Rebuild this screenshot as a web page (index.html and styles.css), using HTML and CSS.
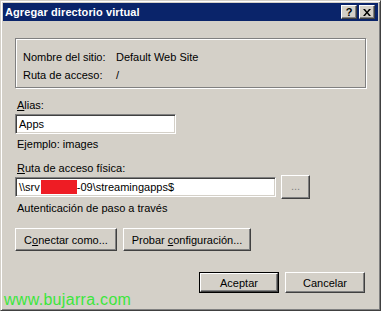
FILE: index.html
```html
<!DOCTYPE html>
<html>
<head>
<meta charset="utf-8">
<link rel="stylesheet" href="styles.css">
</head>
<body>
<div class="window">
  <div class="titlebar">
    <span class="title">Agregar directorio virtual</span>
    <div class="tbtns">
      <span class="tbtn help">?</span>
      <span class="tbtn close"><svg width="8" height="7" viewBox="0 0 8 7"><path d="M0 0h2l2 2.5L6 0h2L5 3.5 8 7H6L4 4.5 2 7H0l3-3.5z" fill="#000"/></svg></span>
    </div>
  </div>
  <div class="content">
    <div class="frame">
      <div class="frow"><span class="flabel">Nombre del sitio:</span><span>Default Web Site</span></div>
      <div class="frow"><span class="flabel">Ruta de acceso:</span><span>/</span></div>
    </div>
    <div class="label first"><u>A</u>lias:</div>
    <div class="input alias">Apps</div>
    <div class="label ex">Ejemplo: images</div>
    <div class="label ruta"><u>R</u>uta de acceso física:</div>
    <div class="pathrow">
      <div class="input path"><span>\\srv</span><span class="redact"></span><span>-09\streamingapps$</span></div>
      <div class="btn browse">...</div>
    </div>
    <div class="label auth">Autenticación de paso a través</div>
    <div class="btnrow">
      <div class="btn conn"><span>C<u>o</u>nectar como...</span></div>
      <div class="btn test"><span>Probar <u>c</u>onfiguración...</span></div>
    </div>
    <div class="okrow">
      <div class="defwrap"><div class="btn ok">Aceptar</div></div>
      <div class="btn cancel">Cancelar</div>
    </div>
  </div>
  <div class="watermark">www.bujarra.com</div>
</div>
</body>
</html>
```
FILE: styles.css
```css
html, body {
  margin: 0;
  padding: 0;
  background: #d4d0c8;
}
body {
  font-family: "Liberation Sans", Arial, sans-serif;
  font-size: 11px;
  color: #000;
}
.window {
  position: relative;
  box-sizing: border-box;
  width: 381px;
  height: 311px;
  background: #d4d0c8;
  border-top: 1px solid #d4d0c8;
  border-left: 1px solid #d4d0c8;
  border-right: 1px solid #404040;
  border-bottom: 1px solid #404040;
  box-shadow: inset 1px 1px 0 #fff, inset -1px -1px 0 #808080;
  padding: 2px;
  overflow: hidden;
}
.titlebar {
  height: 18px;
  background: #0a246a;
  display: flex;
  align-items: center;
  justify-content: space-between;
  padding: 0 3px 0 2px;
}
.title {
  color: #fff;
  font-weight: bold;
  font-size: 11px;
  letter-spacing: 0.1px;
}
.tbtns {
  display: flex;
  gap: 2px;
}
.tbtn {
  box-sizing: border-box;
  width: 16px;
  height: 14px;
  background: #d4d0c8;
  border-top: 1px solid #fff;
  border-left: 1px solid #fff;
  border-right: 1px solid #404040;
  border-bottom: 1px solid #404040;
  box-shadow: inset -1px -1px 0 #808080;
  display: flex;
  align-items: center;
  justify-content: center;
  font-weight: bold;
  font-size: 11px;
  line-height: 1;
}
.content {
  padding: 17px 12px 0 12px;
}
.frame {
  box-sizing: border-box;
  height: 50px;
  border: 1px solid #808080;
  box-shadow: inset 1px 1px 0 #fff, 1px 1px 0 #fff;
  padding: 9px 0 0 7px;
}
.frow {
  display: flex;
  height: 18px;
  line-height: 18px;
}
.flabel {
  width: 93px;
}
.label {
  line-height: 13px;
  height: 13px;
  padding-left: 2px;
}
.label.first { margin-top: 11px; }
.label.ex { margin-top: 4px; }
.label.ruta { margin-top: 11px; }
.label.auth { margin-top: 3px; }
.input {
  box-sizing: border-box;
  height: 20px;
  background: #fff;
  border-top: 1px solid #808080;
  border-left: 1px solid #808080;
  border-right: 1px solid #fff;
  border-bottom: 1px solid #fff;
  box-shadow: inset 1px 1px 0 #404040, inset -1px -1px 0 #d4d0c8;
  padding: 0 3px;
  line-height: 18px;
  white-space: nowrap;
}
.alias {
  width: 161px;
  margin-top: 2px;
}
.pathrow {
  display: flex;
  align-items: center;
  height: 24px;
}
.path {
  width: 261px;
  display: flex;
  align-items: center;
}
.redact {
  display: inline-block;
  width: 36px;
  height: 14px;
  background: #ee1c24;
  margin-left: 1px;
}
.btn {
  box-sizing: border-box;
  background: #d4d0c8;
  border-top: 1px solid #fff;
  border-left: 1px solid #fff;
  border-right: 1px solid #404040;
  border-bottom: 1px solid #404040;
  box-shadow: inset -1px -1px 0 #808080;
  display: flex;
  align-items: center;
  justify-content: center;
  white-space: nowrap;
}
.browse {
  width: 29px;
  height: 24px;
  margin-left: 5px;
  color: #808080;
  padding-bottom: 2px;
}
.btnrow {
  display: flex;
  gap: 6px;
  margin-top: 13px;
}
.conn {
  width: 102px;
  height: 23px;
}
.test {
  width: 128px;
  height: 23px;
}
.okrow {
  display: flex;
  justify-content: flex-end;
  gap: 6px;
  margin-top: 21px;
  padding-right: 1px;
}
.defwrap {
  box-sizing: border-box;
  width: 80px;
  height: 21px;
  border: 1px solid #000;
  display: flex;
}
.ok {
  flex: 1;
}
.cancel {
  width: 80px;
  height: 21px;
}
.watermark {
  position: absolute;
  left: 3px;
  top: 289px;
  font-size: 16px;
  line-height: 20px;
  color: #3ce63c;
  letter-spacing: 0.3px;
}
```
